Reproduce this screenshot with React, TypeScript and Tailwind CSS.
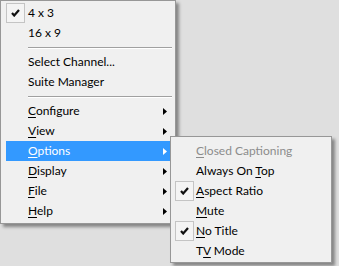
import React from 'react';

type Item =
  | { sep: true }
  | {
      sep?: false;
      label: string;
      key?: number;
      checked?: boolean;
      sub?: boolean;
      active?: boolean;
      disabled?: boolean;
    };

const mainItems: Item[] = [
  { label: '4 x 3', checked: true },
  { label: '16 x 9' },
  { sep: true },
  { label: 'Select Channel...' },
  { label: 'Suite Manager' },
  { sep: true },
  { label: 'Configure', key: 0, sub: true },
  { label: 'View', key: 0, sub: true },
  { label: 'Options', key: 0, sub: true, active: true },
  { label: 'Display', key: 0, sub: true },
  { label: 'File', key: 0, sub: true },
  { label: 'Help', key: 0, sub: true },
];

const optionItems: Item[] = [
  { label: 'Closed Captioning', key: 0, disabled: true },
  { label: 'Always On Top', key: 10 },
  { label: 'Aspect Ratio', key: 0, checked: true },
  { label: 'Mute', key: 0 },
  { label: 'No Title', key: 0, checked: true },
  { label: 'TV Mode', key: 1 },
];

function Label({ text, k }: { text: string; k?: number }) {
  if (k === undefined) return <>{text}</>;
  return (
    <>
      {text.slice(0, k)}
      <span className="underline underline-offset-2">{text[k]}</span>
      {text.slice(k + 1)}
    </>
  );
}

function Check() {
  return (
    <svg width="9" height="8" viewBox="0 0 9 8">
      <path d="M1 4 L3.2 6.5 L8 1" fill="none" stroke="#111" strokeWidth="2.2" />
    </svg>
  );
}

function Menu({ items, rowClass, textPad }: { items: Item[]; rowClass: string; textPad: string }) {
  return (
    <div className="border border-[#979797] bg-[#f0f0f0] shadow-[3px_3px_3px_rgba(0,0,0,0.4)]">
      {items.map((it, i) =>
        it.sep ? (
          <div key={i} className="flex h-[9px] flex-col justify-center pl-[27px] pr-[3px]">
            <div className="h-px bg-[#a0a0a0]" />
            <div className="h-px bg-white" />
          </div>
        ) : (
          <div
            key={i}
            className={`relative flex h-[20px] items-center ${rowClass} ${
              it.active ? 'bg-[#3399ff] text-white' : it.disabled ? 'text-[#8c8c8c]' : 'text-black'
            }`}
          >
            {it.checked && (
              <div className="absolute left-0 top-0 flex h-[20px] w-[19px] items-center justify-center border border-[#c4c4c4] bg-[#f4f4f4]">
                <Check />
              </div>
            )}
            <span className={textPad}>
              <Label text={it.label} k={it.key} />
            </span>
            {it.sub && (
              <svg className="absolute right-[3px] top-[7px]" width="4" height="7" viewBox="0 0 4 7">
                <path d="M0 0 L4 3.5 L0 7 Z" fill={it.active ? '#fff' : '#000'} />
              </svg>
            )}
          </div>
        )
      )}
    </div>
  );
}

export default function App() {
  return (
    <div
      className="relative h-[266px] w-[339px] overflow-hidden bg-[#dfdfdf] text-[12px] leading-none"
      style={{ fontFamily: 'Lato, "Noto Sans", sans-serif' }}
    >
      <div className="absolute left-0 top-0 w-[176px] [&>div]:pt-[2px] [&>div]:pb-[2px]">
        <Menu items={mainItems} rowClass="ml-[5px] mr-[5px]" textPad="pl-[22px]" />
      </div>
      <div className="absolute left-[170px] top-[136px] w-[162px] [&>div]:pt-[4px] [&>div]:pb-[1px]">
        <Menu items={optionItems} rowClass="ml-[4px] mr-[3px]" textPad="pl-[21px]" />
      </div>
    </div>
  );
}
